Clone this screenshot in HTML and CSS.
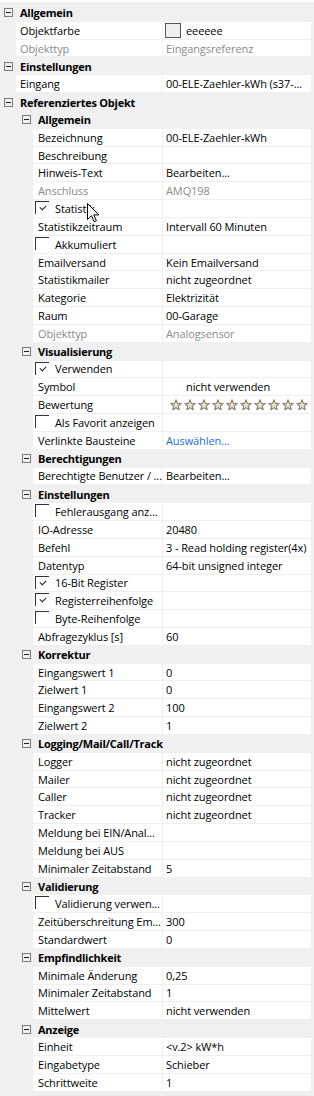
FILE: index.html
```html
<!DOCTYPE html>
<html>
  <head>
    <meta charset="UTF-8" />
    <title>Eigenschaften</title>
    <link rel="stylesheet" href="styles.css">
  </head>
  <body>
    <div class="top-strip"></div>
    <div class="grid">
      <div class="cat lvl1"><span class="toggle"></span>Allgemein</div>
      <div class="prop lvl1">
        <div class="name">Objektfarbe</div>
        <div class="value"><span class="swatch"></span>eeeeee</div>
      </div>
      <div class="prop lvl1 readonly">
        <div class="name">Objekttyp</div>
        <div class="value">Eingangsreferenz</div>
      </div>

      <div class="cat lvl1"><span class="toggle"></span>Einstellungen</div>
      <div class="prop lvl1">
        <div class="name">Eingang</div>
        <div class="value">00-ELE-Zaehler-kWh (s37-...</div>
      </div>

      <div class="cat lvl1"><span class="toggle"></span>Referenziertes Objekt</div>

      <!-- Allgemein -->
      <div class="cat lvl2"><span class="toggle"></span>Allgemein</div>
      <div class="prop lvl2"><div class="name">Bezeichnung</div><div class="value">00-ELE-Zaehler-kWh</div></div>
      <div class="prop lvl2"><div class="name">Beschreibung</div><div class="value"></div></div>
      <div class="prop lvl2"><div class="name">Hinweis-Text</div><div class="value">Bearbeiten...</div></div>
      <div class="prop lvl2 readonly"><div class="name">Anschluss</div><div class="value">AMQ198</div></div>
      <div class="prop lvl2"><div class="name"><span class="check on"></span>Statistik</div><div class="value"></div></div>
      <div class="prop lvl2"><div class="name">Statistikzeitraum</div><div class="value">Intervall 60 Minuten</div></div>
      <div class="prop lvl2"><div class="name"><span class="check"></span>Akkumuliert</div><div class="value"></div></div>
      <div class="prop lvl2"><div class="name">Emailversand</div><div class="value">Kein Emailversand</div></div>
      <div class="prop lvl2"><div class="name">Statistikmailer</div><div class="value">nicht zugeordnet</div></div>
      <div class="prop lvl2"><div class="name">Kategorie</div><div class="value">Elektrizität</div></div>
      <div class="prop lvl2"><div class="name">Raum</div><div class="value">00-Garage</div></div>
      <div class="prop lvl2 readonly"><div class="name">Objekttyp</div><div class="value">Analogsensor</div></div>

      <!-- Visualisierung -->
      <div class="cat lvl2"><span class="toggle"></span>Visualisierung</div>
      <div class="prop lvl2"><div class="name"><span class="check on"></span>Verwenden</div><div class="value"></div></div>
      <div class="prop lvl2"><div class="name">Symbol</div><div class="value symbol">nicht verwenden</div></div>
      <div class="prop lvl2">
        <div class="name">Bewertung</div>
        <div class="value stars">
          <svg class="star" viewBox="0 0 12 12"><path d="M6 0.8L7.41 4.36L11.23 4.6L8.28 7.04L9.23 10.75L6 8.7L2.77 10.75L3.72 7.04L0.77 4.6L4.59 4.36Z"/></svg>
          <svg class="star" viewBox="0 0 12 12"><path d="M6 0.8L7.41 4.36L11.23 4.6L8.28 7.04L9.23 10.75L6 8.7L2.77 10.75L3.72 7.04L0.77 4.6L4.59 4.36Z"/></svg>
          <svg class="star" viewBox="0 0 12 12"><path d="M6 0.8L7.41 4.36L11.23 4.6L8.28 7.04L9.23 10.75L6 8.7L2.77 10.75L3.72 7.04L0.77 4.6L4.59 4.36Z"/></svg>
          <svg class="star" viewBox="0 0 12 12"><path d="M6 0.8L7.41 4.36L11.23 4.6L8.28 7.04L9.23 10.75L6 8.7L2.77 10.75L3.72 7.04L0.77 4.6L4.59 4.36Z"/></svg>
          <svg class="star" viewBox="0 0 12 12"><path d="M6 0.8L7.41 4.36L11.23 4.6L8.28 7.04L9.23 10.75L6 8.7L2.77 10.75L3.72 7.04L0.77 4.6L4.59 4.36Z"/></svg>
          <svg class="star" viewBox="0 0 12 12"><path d="M6 0.8L7.41 4.36L11.23 4.6L8.28 7.04L9.23 10.75L6 8.7L2.77 10.75L3.72 7.04L0.77 4.6L4.59 4.36Z"/></svg>
          <svg class="star" viewBox="0 0 12 12"><path d="M6 0.8L7.41 4.36L11.23 4.6L8.28 7.04L9.23 10.75L6 8.7L2.77 10.75L3.72 7.04L0.77 4.6L4.59 4.36Z"/></svg>
          <svg class="star" viewBox="0 0 12 12"><path d="M6 0.8L7.41 4.36L11.23 4.6L8.28 7.04L9.23 10.75L6 8.7L2.77 10.75L3.72 7.04L0.77 4.6L4.59 4.36Z"/></svg>
          <svg class="star" viewBox="0 0 12 12"><path d="M6 0.8L7.41 4.36L11.23 4.6L8.28 7.04L9.23 10.75L6 8.7L2.77 10.75L3.72 7.04L0.77 4.6L4.59 4.36Z"/></svg>
          <svg class="star" viewBox="0 0 12 12"><path d="M6 0.8L7.41 4.36L11.23 4.6L8.28 7.04L9.23 10.75L6 8.7L2.77 10.75L3.72 7.04L0.77 4.6L4.59 4.36Z"/></svg>
        </div>
      </div>
      <div class="prop lvl2"><div class="name"><span class="check"></span>Als Favorit anzeigen</div><div class="value"></div></div>
      <div class="prop lvl2"><div class="name">Verlinkte Bausteine</div><div class="value"><a class="link" href="#">Auswählen...</a></div></div>

      <!-- Berechtigungen -->
      <div class="cat lvl2"><span class="toggle"></span>Berechtigungen</div>
      <div class="prop lvl2"><div class="name">Berechtigte Benutzer / ...</div><div class="value">Bearbeiten...</div></div>

      <!-- Einstellungen -->
      <div class="cat lvl2"><span class="toggle"></span>Einstellungen</div>
      <div class="prop lvl2"><div class="name"><span class="check"></span>Fehlerausgang anz...</div><div class="value"></div></div>
      <div class="prop lvl2"><div class="name">IO-Adresse</div><div class="value">20480</div></div>
      <div class="prop lvl2"><div class="name">Befehl</div><div class="value">3 - Read holding register(4x)</div></div>
      <div class="prop lvl2"><div class="name">Datentyp</div><div class="value">64-bit unsigned integer</div></div>
      <div class="prop lvl2"><div class="name"><span class="check on"></span>16-Bit Register</div><div class="value"></div></div>
      <div class="prop lvl2"><div class="name"><span class="check on"></span>Registerreihenfolge</div><div class="value"></div></div>
      <div class="prop lvl2"><div class="name"><span class="check"></span>Byte-Reihenfolge</div><div class="value"></div></div>
      <div class="prop lvl2"><div class="name">Abfragezyklus [s]</div><div class="value">60</div></div>

      <!-- Korrektur -->
      <div class="cat lvl2"><span class="toggle"></span>Korrektur</div>
      <div class="prop lvl2"><div class="name">Eingangswert 1</div><div class="value">0</div></div>
      <div class="prop lvl2"><div class="name">Zielwert 1</div><div class="value">0</div></div>
      <div class="prop lvl2"><div class="name">Eingangswert 2</div><div class="value">100</div></div>
      <div class="prop lvl2"><div class="name">Zielwert 2</div><div class="value">1</div></div>

      <!-- Logging -->
      <div class="cat lvl2"><span class="toggle"></span>Logging/Mail/Call/Track</div>
      <div class="prop lvl2"><div class="name">Logger</div><div class="value">nicht zugeordnet</div></div>
      <div class="prop lvl2"><div class="name">Mailer</div><div class="value">nicht zugeordnet</div></div>
      <div class="prop lvl2"><div class="name">Caller</div><div class="value">nicht zugeordnet</div></div>
      <div class="prop lvl2"><div class="name">Tracker</div><div class="value">nicht zugeordnet</div></div>
      <div class="prop lvl2"><div class="name">Meldung bei EIN/Anal...</div><div class="value"></div></div>
      <div class="prop lvl2"><div class="name">Meldung bei AUS</div><div class="value"></div></div>
      <div class="prop lvl2"><div class="name">Minimaler Zeitabstand</div><div class="value">5</div></div>

      <!-- Validierung -->
      <div class="cat lvl2"><span class="toggle"></span>Validierung</div>
      <div class="prop lvl2"><div class="name"><span class="check"></span>Validierung verwen...</div><div class="value"></div></div>
      <div class="prop lvl2"><div class="name">Zeitüberschreitung Em...</div><div class="value">300</div></div>
      <div class="prop lvl2"><div class="name">Standardwert</div><div class="value">0</div></div>

      <!-- Empfindlichkeit -->
      <div class="cat lvl2"><span class="toggle"></span>Empfindlichkeit</div>
      <div class="prop lvl2"><div class="name">Minimale Änderung</div><div class="value">0,25</div></div>
      <div class="prop lvl2"><div class="name">Minimaler Zeitabstand</div><div class="value">1</div></div>
      <div class="prop lvl2"><div class="name">Mittelwert</div><div class="value">nicht verwenden</div></div>

      <!-- Anzeige -->
      <div class="cat lvl2"><span class="toggle"></span>Anzeige</div>
      <div class="prop lvl2"><div class="name">Einheit</div><div class="value">&lt;v.2&gt; kW*h</div></div>
      <div class="prop lvl2"><div class="name">Eingabetype</div><div class="value">Schieber</div></div>
      <div class="prop lvl2"><div class="name">Schrittweite</div><div class="value">1</div></div>

      <svg class="cursor" width="13" height="20" viewBox="0 0 13 20">
        <path d="M0.5 0.5V16.5L4.5 12.7L7.2 18.8L9.4 17.8L6.8 11.9H12Z" fill="#fff" stroke="#000" stroke-width="1" stroke-linejoin="round"/>
      </svg>
    </div>
  </body>
</html>
```

FILE: styles.css
```css
:root {
  --row: 17.83px;
  --gutter: #f0f0f0;
  --cell: #ffffff;
  --text: #000000;
  --muted: #8a8a8a;
  --link: #1a6fd6;
  --box-border: #7a7a7a;
}

* {
  margin: 0;
  padding: 0;
  box-sizing: border-box;
}

body {
  font-family: "Open Sans", "Noto Sans", sans-serif;
  font-size: 11px;
  letter-spacing: -0.1px;
  color: var(--text);
  background-color: var(--gutter);
  width: 314px;
  height: 1096px;
  overflow: hidden;
}

.top-strip {
  height: 4px;
  background-color: #fafafa;
  border-bottom: 1px solid #e6e6e6;
}

.grid {
  position: relative;
  padding-right: 3px;
}

/* category rows */
.cat {
  height: var(--row);
  display: flex;
  align-items: center;
  font-weight: 700;
  letter-spacing: -0.25px;
  white-space: nowrap;
}

.cat.lvl1 {
  padding-left: 4px;
}

.cat.lvl2 {
  padding-left: 22px;
}

.toggle {
  position: relative;
  flex: none;
  width: 9px;
  height: 9px;
  border: 1px solid var(--box-border);
  margin-right: 7px;
}

.toggle::after {
  content: "";
  position: absolute;
  left: 1px;
  top: 3px;
  width: 5px;
  height: 1px;
  background-color: #222;
}

/* property rows */
.prop {
  height: var(--row);
  display: flex;
  padding-bottom: 1px;
}

.prop.lvl1 {
  padding-left: 16px;
}

.prop.lvl2 {
  padding-left: 33px;
}

.name,
.value {
  display: flex;
  align-items: center;
  background-color: var(--cell);
  white-space: nowrap;
  overflow: hidden;
}

.name {
  flex: none;
  padding-left: 4px;
}

.prop.lvl1 .name {
  width: 146px;
}

.prop.lvl2 .name {
  width: 129px;
  padding-left: 5px;
}

.value {
  flex: 1;
  margin-left: 1px;
  padding-left: 3px;
}

.readonly .name,
.readonly .value {
  color: var(--muted);
}

.swatch {
  width: 16px;
  height: 15px;
  border: 1px solid #555;
  background-color: #eeeeee;
  margin-right: 5px;
  margin-left: -1px;
}

.check {
  position: relative;
  flex: none;
  align-self: flex-start;
  width: 14px;
  height: 13px;
  margin: 1px 6px 0 -3px;
  border-left: 1px solid #333;
  border-top: 1px solid #333;
}

.check.on::after {
  content: "";
  position: absolute;
  left: 4px;
  top: 3px;
  width: 5px;
  height: 3px;
  border-left: 1px solid #222;
  border-bottom: 1px solid #222;
  transform: rotate(-45deg);
}

.symbol {
  padding-left: 23px;
}

.stars {
  padding-left: 7px;
  gap: 2px;
}

.star {
  width: 12px;
  height: 12px;
  fill: #e4e0d2;
  stroke: #8c846f;
  stroke-width: 1.1;
  stroke-linejoin: round;
}

.link {
  color: var(--link);
  text-decoration: none;
}

.cursor {
  position: absolute;
  left: 87px;
  top: 199px;
}
```
